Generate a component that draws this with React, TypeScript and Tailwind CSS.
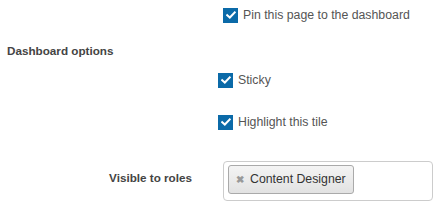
import * as React from 'react';

function Check({ label }: { label: string }) {
  return (
    <label className="flex items-center h-[20px] gap-[5px]">
      <span className="w-[15px] h-[15px] bg-[#0b6aa8] flex items-center justify-center">
        <svg viewBox="0 0 12 12" className="w-[10px] h-[10px]">
          <path d="M1.5 6.2 L4.6 9 L10.5 2.8" fill="none" stroke="#fff" strokeWidth="2.4" strokeLinecap="square" />
        </svg>
      </span>
      <span className="text-[12.3px] leading-[20px] text-[#555]">{label}</span>
    </label>
  );
}

export default function App() {
  return (
    <div className="w-[442px] h-[209px] bg-white overflow-hidden" style={{ fontFamily: '"Liberation Sans", Arial, sans-serif' }}>
      <div className="pt-[5px] pl-[223px]">
        <Check label="Pin this page to the dashboard" />
      </div>
      <div className="mt-[16px] pl-[7px] h-[20px] leading-[20px] text-[11.7px] font-bold text-[#444]">Dashboard options</div>
      <div className="mt-[9px] pl-[218px]">
        <Check label="Sticky" />
      </div>
      <div className="mt-[22px] pl-[218px]">
        <Check label="Highlight this tile" />
      </div>
      <div className="mt-[29px] flex">
        <div className="w-[192px] text-right pt-[7px] h-[20px] leading-[20px] box-content text-[11.7px] font-bold text-[#444]">Visible to roles</div>
        <div className="ml-[31px] w-[210px] h-[40px] border border-[#ccc] rounded-[4px] pl-[4px] pt-[3px]">
          <span className="inline-flex items-center h-[29px] px-[7px] gap-[6px] border border-[#aaa] rounded-[3px] bg-gradient-to-b from-[#f4f4f4] to-[#e2e2e2] text-[12.3px] text-[#333]">
            <span className="text-[#999] text-[10px] font-bold">✖</span>
            Content Designer
          </span>
        </div>
      </div>
    </div>
  );
}
